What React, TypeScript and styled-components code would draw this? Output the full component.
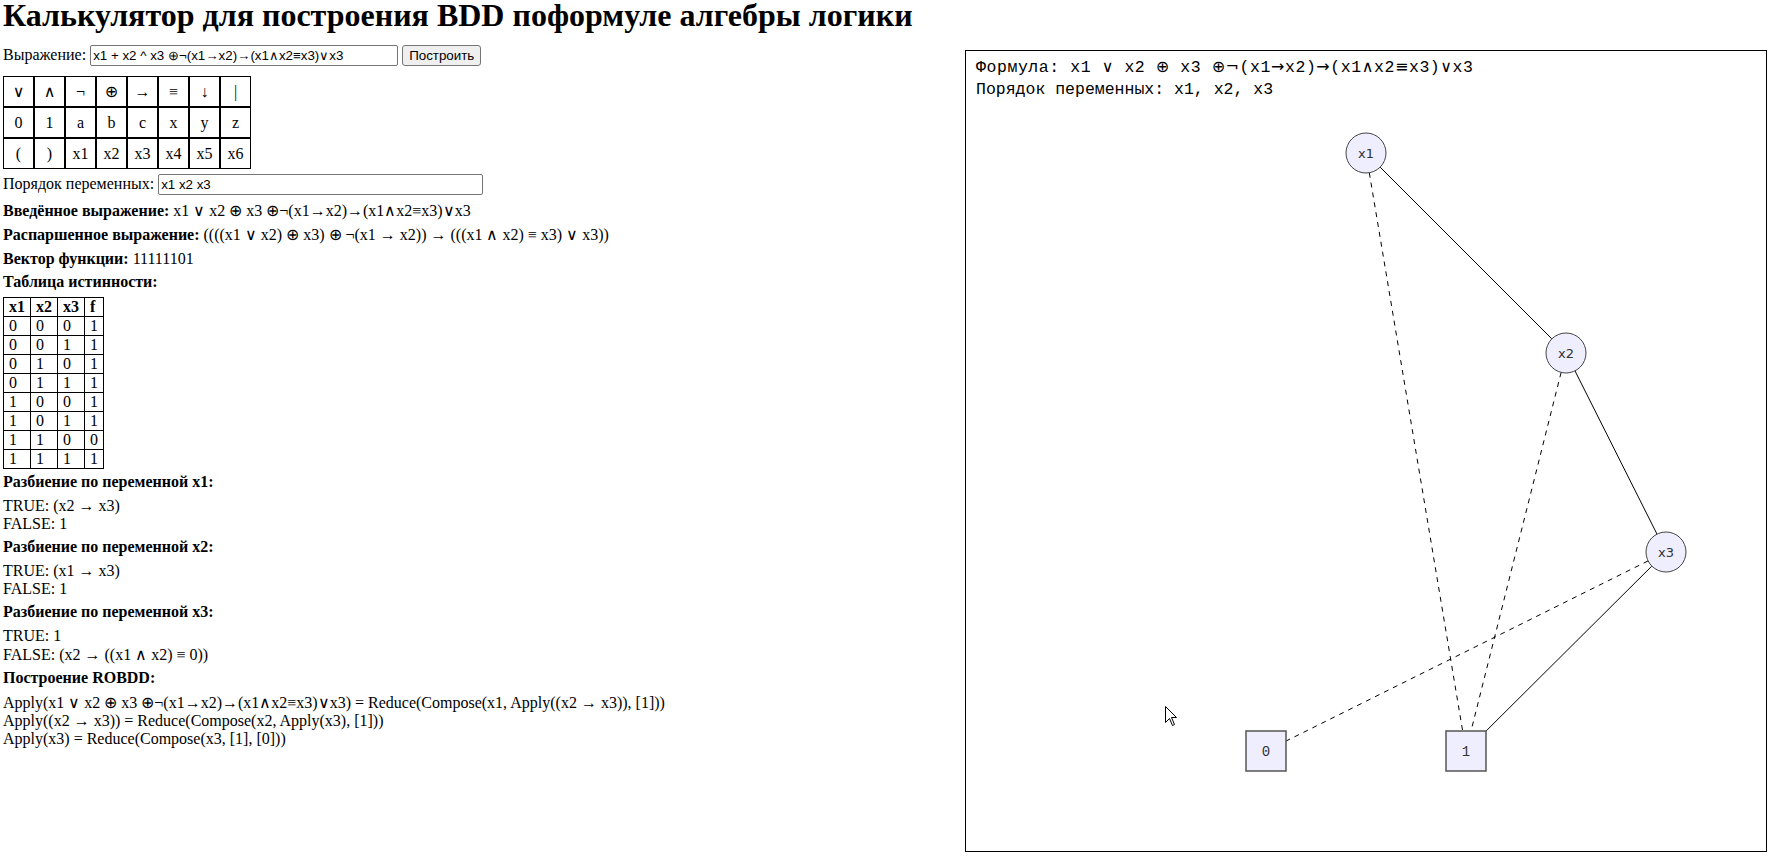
import React from "react";
import styled, { createGlobalStyle } from "styled-components";

const GlobalStyle = createGlobalStyle`
  body {
    margin: 0;
    padding: 0 3px;
    background: #fff;
    color: #000;
    font-family: "Liberation Serif", "Times New Roman", serif;
    font-size: 16px;
  }
`;

const keys = [
  ["∨", "∧", "¬", "⊕", "→", "≡", "↓", "|"],
  ["0", "1", "a", "b", "c", "x", "y", "z"],
  ["(", ")", "x1", "x2", "x3", "x4", "x5", "x6"],
];

const vector = "11111101";

interface INode {
  id: string;
  x: number;
  y: number;
  terminal?: boolean;
}

const nodes: INode[] = [
  { id: "x1", x: 400, y: 102 },
  { id: "x2", x: 600, y: 302 },
  { id: "x3", x: 700, y: 501 },
  { id: "0", x: 300, y: 700, terminal: true },
  { id: "1", x: 500, y: 700, terminal: true },
];

// from, to, dashed (low branch)
const edges: [string, string, boolean][] = [
  ["x1", "x2", false],
  ["x1", "1", true],
  ["x2", "x3", false],
  ["x2", "1", true],
  ["x3", "0", true],
  ["x3", "1", false],
];

const R = 20;
const HALF = 20;

function edgePoints(a: INode, b: INode) {
  const dx = b.x - a.x;
  const dy = b.y - a.y;
  const len = Math.sqrt(dx * dx + dy * dy);
  const x1 = a.x + (dx / len) * R;
  const y1 = a.y + (dy / len) * R;
  let x2 = b.x - (dx / len) * R;
  let y2 = b.y - (dy / len) * R;
  if (b.terminal) {
    // clip to the box
    const t = Math.min(HALF / Math.abs(dx || 1e-9), HALF / Math.abs(dy || 1e-9));
    x2 = b.x - dx * t;
    y2 = b.y - dy * t;
  }
  return { x1, y1, x2, y2 };
}

// canvas fonts fall back for the logic symbols
const formula = "x1 ∨ x2 ⊕ x3 ⊕¬(x1→x2)→(x1∧x2≡x3)∨x3";
const SYMBOLS = "∨⊕¬→∧≡";

const App: React.FC = () => {
  const byId = (id: string) => nodes.find((n) => n.id === id)!;

  return (
    <>
      <GlobalStyle />
      <Title>Калькулятор для построения BDD поформуле алгебры логики</Title>
      <Layout>
        <LeftColumn>
          <FormRow>
            Выражение:{" "}
            <TextInput
              $width={308}
              defaultValue="x1 + x2 ^ x3 ⊕¬(x1→x2)→(x1∧x2≡x3)∨x3"
            />{" "}
            <BuildButton>Построить</BuildButton>
          </FormRow>
          <Keypad>
            {keys.flat().map((k, i) => (
              <KeyButton key={i}>{k}</KeyButton>
            ))}
          </Keypad>
          <FormRow $top={5}>
            Порядок переменных: <TextInput $width={325} defaultValue="x1 x2 x3" />
          </FormRow>
          <Para>
            <b>Введённое выражение:</b> x1 ∨ x2 ⊕ x3 ⊕¬(x1→x2)→(x1∧x2≡x3)∨x3
          </Para>
          <Para>
            <b>Распаршенное выражение:</b> ((((x1 ∨ x2) ⊕ x3) ⊕ ¬(x1 → x2)) →
            (((x1 ∧ x2) ≡ x3) ∨ x3))
          </Para>
          <Para>
            <b>Вектор функции:</b> {vector}
          </Para>
          <Para>
            <b>Таблица истинности:</b>
          </Para>
          <TruthTable>
            <thead>
              <tr>
                <th>x1</th>
                <th>x2</th>
                <th>x3</th>
                <th>f</th>
              </tr>
            </thead>
            <tbody>
              {vector.split("").map((f, i) => (
                <tr key={i}>
                  <td>{(i >> 2) & 1}</td>
                  <td>{(i >> 1) & 1}</td>
                  <td>{i & 1}</td>
                  <td>{f}</td>
                </tr>
              ))}
            </tbody>
          </TruthTable>
          <SectionTitle>Разбиение по переменной x1:</SectionTitle>
          <Para>
            TRUE: (x2 → x3)
            <br />
            FALSE: 1
          </Para>
          <SectionTitle>Разбиение по переменной x2:</SectionTitle>
          <Para>
            TRUE: (x1 → x3)
            <br />
            FALSE: 1
          </Para>
          <SectionTitle>Разбиение по переменной x3:</SectionTitle>
          <Para>
            TRUE: 1
            <br />
            FALSE: (x2 → ((x1 ∧ x2) ≡ 0))
          </Para>
          <SectionTitle>Построение ROBDD:</SectionTitle>
          <Para>
            Apply(x1 ∨ x2 ⊕ x3 ⊕¬(x1→x2)→(x1∧x2≡x3)∨x3) = Reduce(Compose(x1,
            Apply((x2 → x3)), [1]))
            <br />
            Apply((x2 → x3)) = Reduce(Compose(x2, Apply(x3), [1]))
            <br />
            Apply(x3) = Reduce(Compose(x3, [1], [0]))
          </Para>
        </LeftColumn>
        <GraphBox>
          <svg width="800" height="800" viewBox="0 0 800 800">
            <CanvasText x="10" y="21" textLength="497" lengthAdjust="spacing">
              Формула:{" "}
              {formula.split("").map((ch, i) =>
                SYMBOLS.includes(ch) ? (
                  <SymbolSpan key={i}>{ch}</SymbolSpan>
                ) : (
                  <tspan key={i}>{ch}</tspan>
                )
              )}
            </CanvasText>
            <CanvasText x="10" y="43">
              Порядок переменных: x1, x2, x3
            </CanvasText>
            {edges.map(([from, to, dashed], i) => {
              const p = edgePoints(byId(from), byId(to));
              return (
                <line
                  key={i}
                  x1={p.x1}
                  y1={p.y1}
                  x2={p.x2}
                  y2={p.y2}
                  stroke="#000"
                  strokeWidth="1"
                  strokeDasharray={dashed ? "5,5" : undefined}
                />
              );
            })}
            {nodes.map((n) =>
              n.terminal ? (
                <g key={n.id}>
                  <rect
                    x={n.x - HALF}
                    y={n.y - HALF}
                    width={HALF * 2}
                    height={HALF * 2}
                    fill="#eeeeff"
                    stroke="#555"
                    strokeWidth="1.5"
                  />
                  <TerminalLabel x={n.x} y={n.y + 5}>
                    {n.id}
                  </TerminalLabel>
                </g>
              ) : (
                <g key={n.id}>
                  <circle cx={n.x} cy={n.y} r={R} fill="#eeeeff" stroke="#444" strokeWidth="1" />
                  <NodeLabel x={n.x} y={n.y + 5}>
                    {n.id}
                  </NodeLabel>
                </g>
              )
            )}
            {/* mouse pointer captured in the screenshot */}
            <path
              d="M199.5 655.5 L199.5 671.5 L203.5 667.5 L206.5 674.5 L208.5 673.5 L205.5 666.5 L210.5 666.5 Z"
              fill="#fff"
              stroke="#000"
              strokeWidth="1"
            />
          </svg>
        </GraphBox>
      </Layout>
    </>
  );
};

const Title = styled.h1`
  margin: 0;
  font-size: 32px;
  line-height: 30px;
  font-weight: bold;
`;

const Layout = styled.div`
  display: grid;
  grid-template-columns: 962px 802px;
  align-items: start;
  margin-top: 15px;
`;

const LeftColumn = styled.div``;

const FormRow = styled.div<{ $top?: number }>`
  margin-top: ${(p) => p.$top ?? 0}px;
`;

const TextInput = styled.input<{ $width: number }>`
  box-sizing: border-box;
  width: ${(p) => p.$width}px;
  height: 21px;
  padding: 1px 2px;
  border: 1px solid #767676;
  border-radius: 2px;
  font-family: "Liberation Sans", Arial, sans-serif;
  font-size: 13.33px;
  color: #000;
  vertical-align: baseline;
`;

const BuildButton = styled.button`
  box-sizing: border-box;
  height: 21px;
  width: 79px;
  padding: 1px 6px;
  border: 1px solid #767676;
  border-radius: 3px;
  background: #efefef;
  font-family: "Liberation Sans", Arial, sans-serif;
  font-size: 13.33px;
  color: #000;
`;

const Keypad = styled.div`
  display: grid;
  grid-template-columns: repeat(8, 31px);
  grid-auto-rows: 31px;
  margin-top: 10px;
  width: max-content;
`;

const KeyButton = styled.button`
  box-sizing: border-box;
  margin: 0;
  padding: 0;
  border: 1px solid #000;
  background: #fff;
  color: #000;
  font-family: "Liberation Serif", "DejaVu Sans", serif;
  font-size: 16px;
  font-weight: normal;
`;

const Para = styled.p`
  margin: 5.5px 0;
`;

const SectionTitle = styled.p`
  margin: 4px 0 5.5px;
  font-weight: bold;
`;

const TruthTable = styled.table`
  border-collapse: collapse;
  margin: 6px 0 0;

  th,
  td {
    border: 1px solid #000;
    padding: 0 5px;
    line-height: 18px;
    text-align: left;
    font-size: 16px;
  }

  th {
    font-weight: bold;
  }
`;

const GraphBox = styled.div`
  border: 1px solid #000;
  width: 800px;
  height: 800px;
  margin-top: 5px;

  svg {
    display: block;
  }
`;

const CanvasText = styled.text`
  font-family: "Liberation Mono", "DejaVu Sans Mono", monospace;
  font-size: 16.5px;
  fill: #000;
`;

const SymbolSpan = styled.tspan`
  font-family: "DejaVu Sans", sans-serif;
  font-size: 16px;
`;

const NodeLabel = styled.text`
  font-family: "DejaVu Sans", Verdana, sans-serif;
  font-size: 13px;
  fill: #333;
  text-anchor: middle;
`;

const TerminalLabel = styled.text`
  font-family: "Liberation Mono", "DejaVu Sans Mono", monospace;
  font-size: 14px;
  fill: #333;
  text-anchor: middle;
`;

export default App;
